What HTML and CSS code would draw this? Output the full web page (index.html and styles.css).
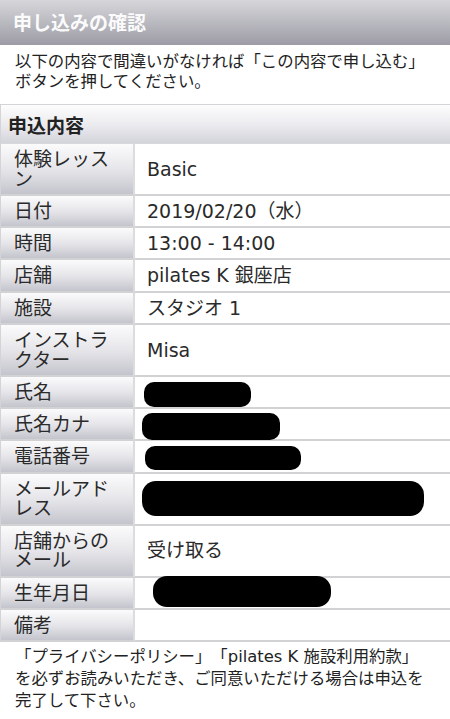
FILE: index.html
```html
<!DOCTYPE html>
<html lang="ja">
<head>
<meta charset="utf-8">
<title>申し込みの確認</title>
<link rel="stylesheet" href="styles.css">
</head>
<body>
<header class="topbar"><h1 class="title">申し込みの確認</h1></header>
<p class="intro">以下の内容で間違いがなければ「この内容で申し込む」ボタンを押してください。</p>
<section class="section">
  <h2 class="section-head">申込内容</h2>
  <table class="details">
    <tr><th>体験レッスン</th><td>Basic</td></tr>
    <tr><th>日付</th><td>2019/02/20（水）</td></tr>
    <tr><th>時間</th><td>13:00 - 14:00</td></tr>
    <tr><th>店舗</th><td>pilates K 銀座店</td></tr>
    <tr><th>施設</th><td>スタジオ 1</td></tr>
    <tr><th>インストラクター</th><td>Misa</td></tr>
    <tr><th>氏名</th><td><span class="redact r-name"></span></td></tr>
    <tr><th>氏名カナ</th><td><span class="redact r-kana"></span></td></tr>
    <tr><th>電話番号</th><td><span class="redact r-tel"></span></td></tr>
    <tr><th>メールアドレス</th><td><span class="redact r-mail"></span></td></tr>
    <tr><th>店舗からのメール</th><td>受け取る</td></tr>
    <tr><th>生年月日</th><td><span class="redact r-birth"></span></td></tr>
    <tr><th>備考</th><td></td></tr>
  </table>
</section>
<p class="notice">「プライバシーポリシー」「pilates K 施設利用約款」<br>を必ずお読みいただき、ご同意いただける場合は申込を完了して下さい。</p>
</body>
</html>
```
FILE: styles.css
```css
html, body {
  margin: 0;
  padding: 0;
  background: #fff;
}
body {
  width: 450px;
  font-family: "DejaVu Sans", "Noto Sans CJK JP", sans-serif;
  color: #222;
  text-spacing-trim: space-all;
}
.topbar {
  height: 45px;
  display: flex;
  align-items: center;
  padding: 0 13px;
  background: linear-gradient(to bottom, #d6d6da 0%, #b9b9c0 50%, #9d9ca6 100%);
}
.title {
  margin: 0;
  font-size: 19px;
  font-weight: bold;
  line-height: 22px;
  color: #fbfbfb;
}
.intro {
  margin: 0;
  padding: 7px 15px 0;
  font-size: 16.4px;
  line-height: 20px;
  height: 52px;
  color: #222;
}
.section {
  border-top: 1px solid #d4d4d8;
  border-left: 1px solid #d4d4d8;
}
.section-head {
  margin: 0;
  height: 38px;
  display: flex;
  align-items: center;
  padding: 0 7px;
  font-size: 19px;
  font-weight: bold;
  color: #222;
  background: linear-gradient(to bottom, #fdfdfd 0%, #ececf0 50%, #d3d3db 100%);
  border-bottom: 1px solid #d8d8dc;
}
.details {
  width: 100%;
  border-collapse: separate;
  border-spacing: 0;
  font-size: 19px;
  line-height: 19.6px;
}
.details th,
.details td {
  height: 19.6px;
  padding: 6px 0 4.7px;
  border-bottom: 2px solid #d2d2d4;
  vertical-align: middle;
  text-align: left;
  font-weight: normal;
  color: #2a2a2a;
}
.details th {
  width: 102px;
  padding-left: 13px;
  padding-right: 17px;
  border-right: 2px solid #dcdcdf;
  background: linear-gradient(to bottom, #fbfbfc 0%, #e6e6ea 50%, #c4c4cd 100%);
}
.details td {
  padding-left: 12px;
  background: #fff;
}
.redact {
  display: inline-block;
  vertical-align: top;
  background: #000;
  border-radius: 10px;
}
.r-name { width: 107px; height: 25px; margin: -1px 0 -4.4px -3px; }
.r-kana { width: 138px; height: 27px; margin: -2.3px 0 -5.1px -5px; }
.r-tel { width: 156px; height: 24px; margin: -1.7px 0 -2.7px -2px; }
.r-mail { width: 282px; height: 35px; margin: -8.1px 0 -7.3px -5px; border-radius: 14px; }
.r-birth { width: 178px; height: 31px; margin: -7.3px 0 -4.1px 6px; border-radius: 14px; }
.notice {
  margin: 0;
  padding: 4px 15px 0;
  font-size: 16.4px;
  line-height: 22px;
  color: #222;
}
```
